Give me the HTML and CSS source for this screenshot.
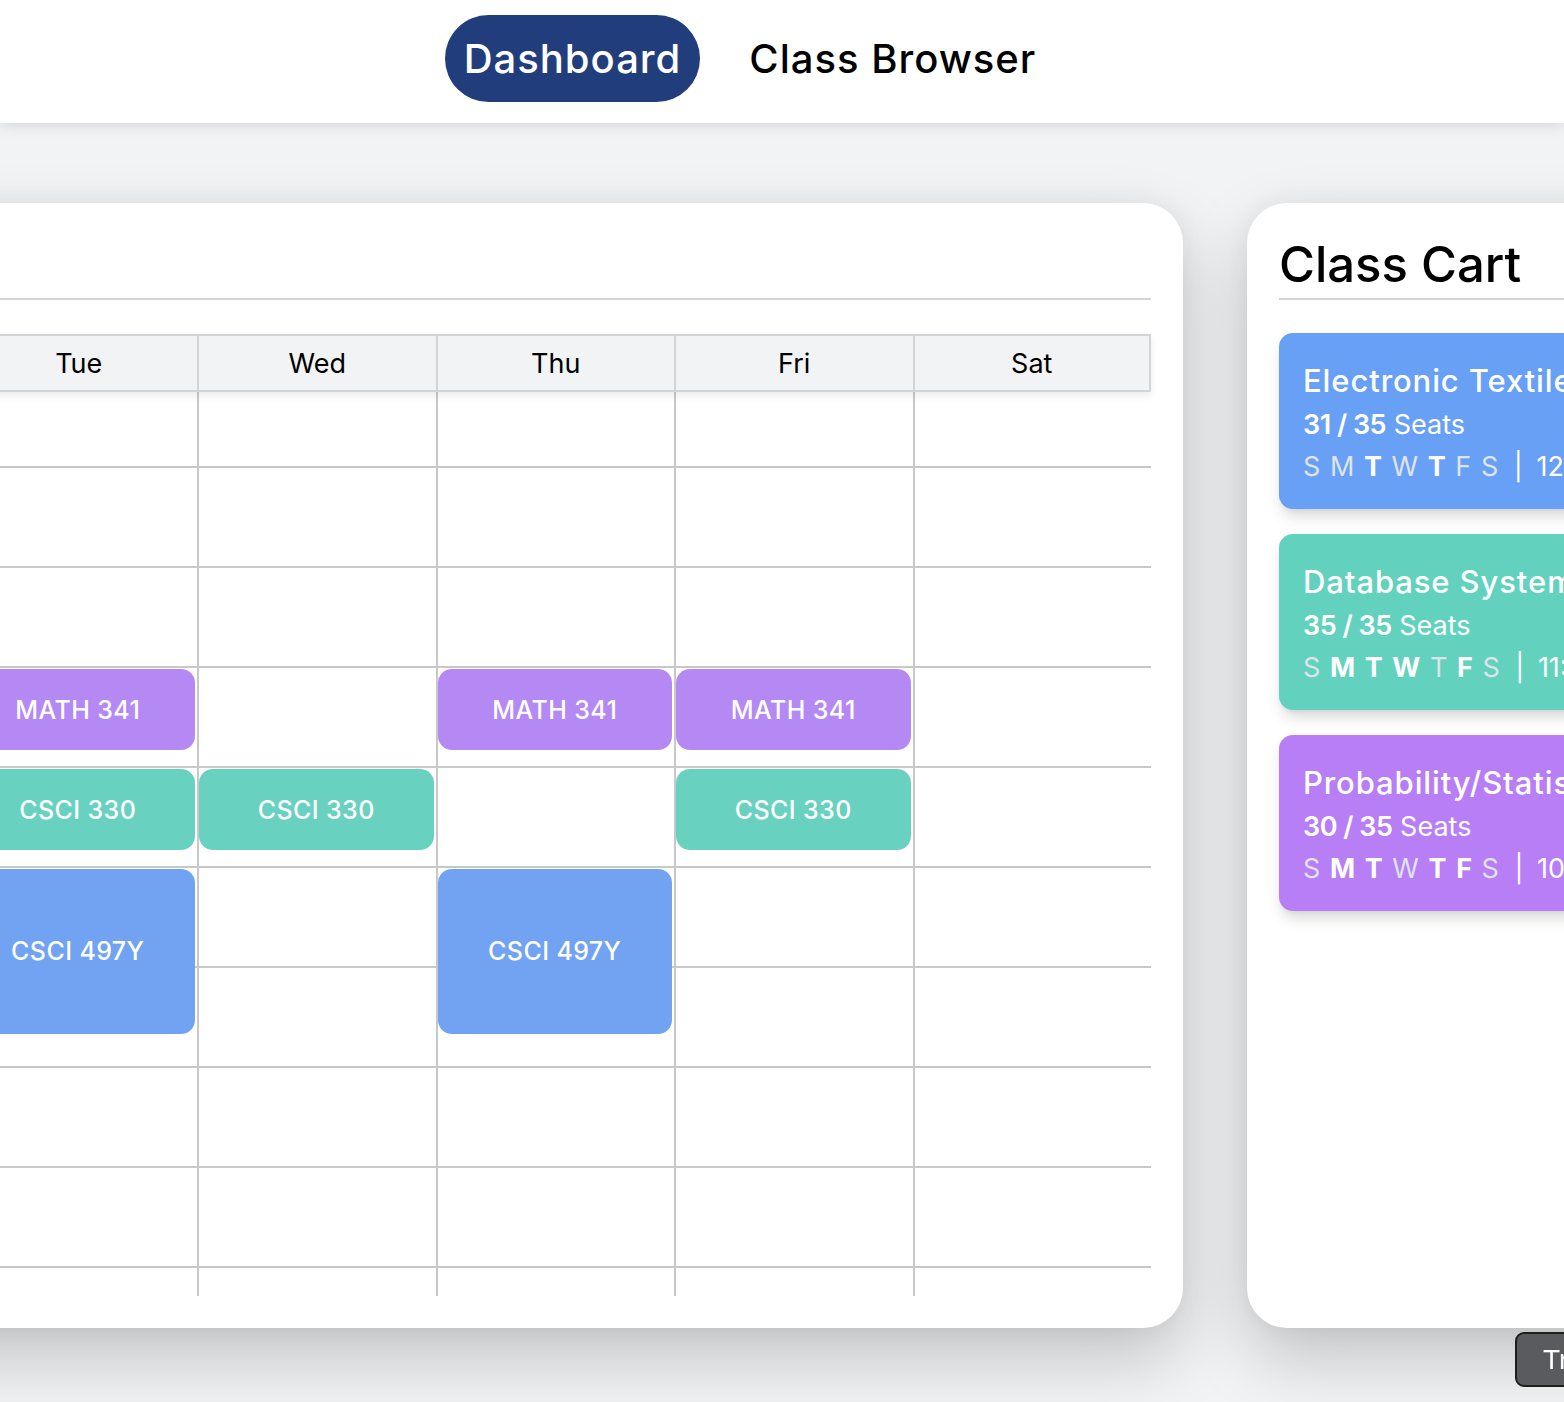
FILE: index.html
```html
<!DOCTYPE html>
<html lang="en">
<head>
    <meta charset="UTF-8">
    <meta name="viewport" content="width=device-width, initial-scale=1.0">
    <title>Dashboard</title>
    <link rel="stylesheet" href="styles.css">
</head>
<body>

<!-- Top navigation -->
<nav class="topnav">
    <a href="#" class="nav-link active">Dashboard</a>
    <a href="#" class="nav-link">Class Browser</a>
</nav>

<main class="dashboard">
    <!-- Weekly schedule -->
    <section class="card schedule">
        <h2 class="card-title">My Schedule</h2>
        <div class="week">
            <div class="week-head">
                <div class="head-cell"></div>
                <div class="head-cell">Sun</div>
                <div class="head-cell">Mon</div>
                <div class="head-cell">Tue</div>
                <div class="head-cell">Wed</div>
                <div class="head-cell">Thu</div>
                <div class="head-cell">Fri</div>
                <div class="head-cell">Sat</div>
            </div>
            <div class="week-body">
                <div class="week-grid" id="week-grid"></div>
            </div>
        </div>
    </section>

    <!-- Cart -->
    <section class="card cart">
        <h2 class="card-title">Class Cart</h2>
        <div class="cart-list">
            <div class="cart-item blue">
                <div class="cart-name">Electronic Textiles</div>
                <div class="cart-seats"><b>31 / 35</b> Seats</div>
                <div class="cart-days">
                    <span>S</span> <span>M</span> <span class="on">T</span> <span>W</span> <span class="on">T</span> <span>F</span> <span>S</span>
                    <span class="sep">|</span> 12:00 PM - 1:40 PM
                </div>
            </div>
            <div class="cart-item teal">
                <div class="cart-name">Database Systems</div>
                <div class="cart-seats"><b>35 / 35</b> Seats</div>
                <div class="cart-days">
                    <span>S</span> <span class="on">M</span> <span class="on">T</span> <span class="on">W</span> <span>T</span> <span class="on">F</span> <span>S</span>
                    <span class="sep">|</span> 11:00 AM - 11:50 AM
                </div>
            </div>
            <div class="cart-item purple">
                <div class="cart-name">Probability/Statistics</div>
                <div class="cart-seats"><b>30 / 35</b> Seats</div>
                <div class="cart-days">
                    <span>S</span> <span class="on">M</span> <span class="on">T</span> <span>W</span> <span class="on">T</span> <span class="on">F</span> <span>S</span>
                    <span class="sep">|</span> 10:00 AM - 10:50 AM
                </div>
            </div>
        </div>
    </section>
</main>

<button class="float-btn">Transfer Credits</button>

<script>
    // classes shown on the calendar (days: 0 = Sun)
    const events = [
        { code: 'MATH 341', days: [1, 2, 4, 5], start: 10, mins: 50, color: 'purple' },
        { code: 'CSCI 330', days: [1, 2, 3, 5], start: 11, mins: 50, color: 'teal' },
        { code: 'CSCI 497Y', days: [2, 4], start: 12, mins: 100, color: 'blue' }
    ];
    const firstHour = 7;
    const hours = 10;
    const rowHeight = 100;

    function buildWeek() {
        const grid = document.getElementById('week-grid');

        const timeCol = document.createElement('div');
        timeCol.className = 'time-col';
        for (let h = 0; h < hours; h++) {
            const hour = firstHour + h;
            const slot = document.createElement('div');
            slot.className = 'slot time-slot';
            slot.textContent = (hour > 12 ? hour - 12 : hour) + (hour >= 12 ? ' PM' : ' AM');
            timeCol.appendChild(slot);
        }
        grid.appendChild(timeCol);

        for (let d = 0; d < 7; d++) {
            const col = document.createElement('div');
            col.className = 'day-col';
            for (let h = 0; h < hours; h++) {
                const slot = document.createElement('div');
                slot.className = 'slot';
                col.appendChild(slot);
            }
            events.forEach(ev => {
                if (!ev.days.includes(d)) return;
                const box = document.createElement('div');
                box.className = 'event ' + ev.color;
                box.textContent = ev.code;
                box.style.top = ((ev.start - firstHour) * rowHeight + 1) + 'px';
                box.style.height = (ev.mins * rowHeight / 60 - 2) + 'px';
                col.appendChild(box);
            });
            grid.appendChild(col);
        }
    }

    buildWeek();
</script>

</body>
</html>
```

FILE: styles.css
```css
html, body {
    overflow: hidden;
}
body {
    margin: 0;
    font-family: Inter, "Noto Sans", sans-serif;
    background-color: #f2f3f5;
    color: #000;
    height: 100vh;
}

/* Top navigation */
.topnav {
    height: 123px;
    box-sizing: border-box;
    background-color: #fff;
    display: flex;
    justify-content: center;
    align-items: center;
    gap: 30px;
    padding: 0 64px 6px 0;
    box-shadow: 0 2px 14px rgba(0, 0, 0, 0.13);
    position: relative;
    z-index: 2;
}
.nav-link {
    font-size: 40px;
    font-weight: 500;
    letter-spacing: 1px;
    color: #000;
    text-decoration: none;
    padding: 0 19px;
    height: 87px;
    line-height: 87px;
    border-radius: 44px;
}
.nav-link.active {
    background-color: #223d7c;
    color: #fff;
}

/* Main area: the two cards are centered and overflow both sides */
.dashboard {
    display: flex;
    justify-content: center;
    gap: 64px;
    padding-top: 80px;
}
.card {
    flex: none;
    background-color: #fff;
    border-radius: 40px;
    padding: 32px;
    box-sizing: border-box;
    box-shadow: 0 30px 70px rgba(0, 0, 0, 0.2), 0 0 24px rgba(0, 0, 0, 0.05);
}
.schedule {
    width: 1823.5px;
}
.cart {
    width: 957.5px;
}
.card-title {
    margin: 0 0 34px;
    font-size: 49px;
    font-weight: 500;
    line-height: 60px;
    padding-bottom: 3px;
    border-bottom: 2px solid #d1d5db;
    white-space: nowrap;
}
.cart .card-title {
    margin-bottom: 33px;
}

/* Week table */
.week-head,
.week-grid {
    display: grid;
    grid-template-columns: 90px repeat(7, 238.5px);
}
.week-head {
    position: relative;
    z-index: 1;
    box-shadow: 0 4px 8px rgba(0, 0, 0, 0.08);
}
.head-cell {
    height: 58px;
    box-sizing: border-box;
    background-color: #f2f3f5;
    border: 2px solid #d2d4d9;
    border-right: none;
    display: flex;
    align-items: center;
    justify-content: center;
    font-size: 27px;
    font-weight: 400;
}
.head-cell:last-child {
    border-right: 2px solid #d2d4d9;
}
.week-body {
    height: 904px;
    overflow: hidden;
}
.week-grid {
    margin-top: -24px; /* scrolled so the 7 AM row is partly hidden */
}
.day-col {
    border-left: 2px solid #c8c8c8;
    box-sizing: border-box;
    position: relative;
}
.slot {
    height: 100px;
    box-sizing: border-box;
    border-bottom: 2px solid #c8c8c8;
}
.time-slot {
    font-size: 18px;
    color: #666;
    padding: 6px 10px;
    text-align: right;
}

/* Class blocks */
.event {
    position: absolute;
    left: 0;
    right: 2px;
    border-radius: 14px;
    display: flex;
    align-items: center;
    justify-content: center;
    color: #fff;
    font-size: 25px;
    font-weight: 500;
    letter-spacing: 0.4px;
}
.event.purple { background-color: #b589f4; }
.event.teal { background-color: #69d1c0; }
.event.blue { background-color: #72a3f3; }

/* Cart */
.cart-list {
    display: flex;
    flex-direction: column;
    gap: 25px;
}
.cart-item {
    border-radius: 14px;
    padding: 26px 24px 22px;
    color: #fff;
    white-space: nowrap;
    box-shadow: 0 10px 15px -3px rgba(0, 0, 0, 0.15), 0 4px 6px -4px rgba(0, 0, 0, 0.1);
}
.cart-item.blue { background-color: #68a0f6; }
.cart-item.teal { background-color: #62d2be; }
.cart-item.purple { background-color: #b77ef5; }
.cart-name {
    font-size: 31px;
    font-weight: 500;
    line-height: 44px;
    letter-spacing: 0.9px;
}
.cart-seats {
    font-size: 27px;
    line-height: 43px;
}
.cart-seats b {
    font-weight: 600;
    letter-spacing: -0.5px;
}
.cart-days {
    font-size: 27px;
    line-height: 41px;
    word-spacing: 2px;
}
.cart-days span {
    color: #dfe3ea;
}
.cart-days span.on {
    color: #fff;
    font-weight: 700;
}
.cart-days .sep {
    color: #fff;
    margin: 0 4px 0 6px;
}

/* Floating button, bottom right */
.float-btn {
    position: fixed;
    bottom: 15px;
    right: -150px;
    width: 199px;
    height: 55px;
    text-align: left;
    white-space: nowrap;
    overflow: hidden;
    padding: 0 0 0 26px;
    background-color: #5a5b5f;
    color: #fff;
    border: 2px solid #1e1e1e;
    border-radius: 9px;
    font-family: "Liberation Sans", Arial, sans-serif;
    font-size: 28px;
}
```
